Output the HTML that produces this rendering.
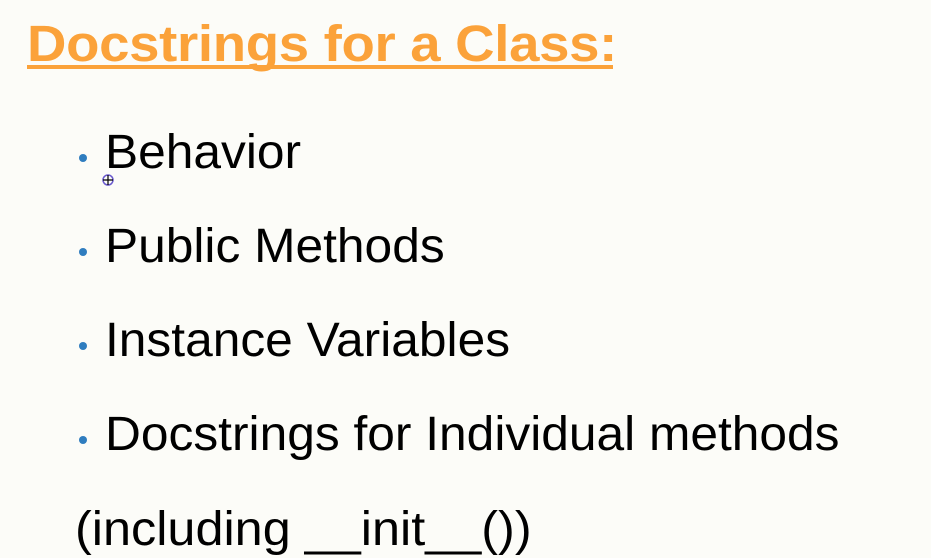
<!DOCTYPE html>
<html><head><style>
html,body{margin:0;padding:0}
body{width:931px;height:558px;overflow:hidden;background:#fcfcf8;position:relative;font-family:"Liberation Sans",sans-serif}
.t{position:absolute;left:27px;top:14px;font-weight:bold;font-size:51px;color:#fba23a;letter-spacing:-0.3px;white-space:nowrap;line-height:60px;transform:scaleX(1.07);transform-origin:0 0}
.u{position:absolute;left:27px;top:65px;width:586px;height:4px;background:#fba23a}
.l{position:absolute;left:105px;font-size:48px;color:#000;white-space:nowrap;line-height:50px;transform:scaleX(1.035);transform-origin:0 0}
.b{position:absolute;left:79px;width:8px;height:8px;border-radius:50%;background:#2f7dbf}
</style></head><body>
<div class="t">Docstrings for a Class:</div>
<div class="u"></div>
<div class="b" style="top:154px"></div><div class="l" style="top:128px">Behavior</div>
<div class="b" style="top:248px"></div><div class="l" style="top:222px">Public Methods</div>
<div class="b" style="top:342px"></div><div class="l" style="top:316px">Instance Variables</div>
<div class="b" style="top:436px"></div><div class="l" style="top:410px">Docstrings for Individual methods</div>
<div class="l" style="top:505px;left:75px;transform:scaleX(1.05)">(including __init__())</div>
<svg style="position:absolute;left:101px;top:173px" width="14" height="14"><circle cx="7" cy="7" r="5" fill="none" stroke="#6a5acd" stroke-width="1.5"/><path d="M7 2V12M2 7H12" stroke="#000" stroke-width="1.2"/></svg>
</body></html>
